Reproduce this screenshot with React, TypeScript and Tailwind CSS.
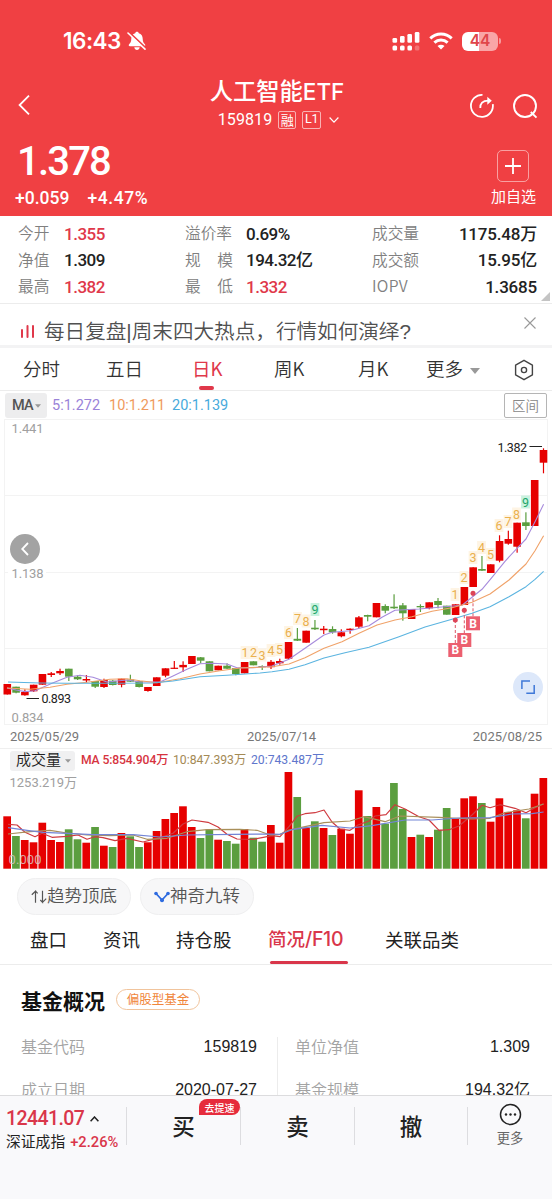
import type { ReactNode } from "react";

type Candle = [dir: "r" | "g", high: number, top: number, bottom: number, low: number];

const STEP = 8.79;
const FIRST_X = 7.3;
const RED = "#e60000";
const GREEN = "#5b9e3f";

// y values share the page scale; the price chart starts at y = 419
const CANDLES: Candle[] = [
  ["r", 684, 684, 694.5, 694.5],
  ["g", 686.7, 686.7, 692.7, 693.3],
  ["r", 689.3, 692, 695.3, 695.7],
  ["r", 684.7, 684.7, 691.3, 692],
  ["r", 674, 674, 684.7, 684.7],
  ["r", 672, 673.3, 675, 677],
  ["r", 668.7, 671, 673.3, 675],
  ["g", 668.7, 668.7, 676.7, 681],
  ["g", 675, 676.7, 679.3, 680],
  ["r", 675, 679, 680.5, 682.7],
  ["g", 681, 681, 686.7, 688],
  ["r", 678.7, 680, 687, 688],
  ["g", 680, 680.7, 685, 685.5],
  ["r", 678.7, 678.7, 684.7, 687.3],
  ["g", 674.7, 679.5, 681.7, 682],
  ["g", 681, 681, 687, 687.5],
  ["r", 687, 687, 691, 691.7],
  ["r", 677.3, 677.3, 686, 686],
  ["r", 668.3, 668.3, 675.7, 677.3],
  ["r", 661, 667.7, 668.9, 669],
  ["r", 661.3, 664.9, 667.3, 672],
  ["r", 656, 656, 664, 664],
  ["g", 657, 657.3, 660.7, 663.3],
  ["g", 661.3, 661.3, 671.3, 671.3],
  ["r", 665.7, 665.7, 670.3, 670.3],
  ["g", 663.3, 665.7, 668.7, 669],
  ["g", 668, 668, 674, 675.3],
  ["r", 662, 662, 673.3, 673.3],
  ["g", 661.3, 661.3, 665.3, 665.3],
  ["g", 665.3, 666, 667.2, 670],
  ["r", 660, 661.8, 667.2, 669],
  ["r", 658.7, 661, 663.3, 664.7],
  ["r", 642, 642, 658.7, 658.7],
  ["g", 628, 638.8, 640.7, 641],
  ["r", 630.7, 630.7, 642.7, 642.7],
  ["g", 620, 627.7, 629.3, 630],
  ["r", 626, 628.7, 630.2, 634],
  ["g", 626.3, 629, 632.3, 633.7],
  ["r", 629.3, 632.3, 636.3, 637.3],
  ["r", 628.3, 628.7, 630, 633.7],
  ["r", 616, 617.3, 626.7, 628],
  ["g", 614.7, 615, 616.7, 621.3],
  ["r", 603, 603, 617.3, 617.3],
  ["g", 604.3, 606, 610.7, 613.3],
  ["g", 594.3, 606.7, 608.3, 609],
  ["g", 603, 605.3, 613.3, 620.7],
  ["r", 609, 609, 619, 619],
  ["g", 604.3, 606, 607.3, 612],
  ["r", 602.3, 602.3, 608.3, 609.3],
  ["g", 598, 601, 605, 608.3],
  ["g", 605.7, 605.7, 614.7, 614.7],
  ["r", 604.3, 604.3, 615, 615],
  ["r", 587, 587, 605, 605],
  ["r", 567.3, 567.3, 587, 587],
  ["g", 556, 569, 570.7, 571],
  ["r", 564.3, 564.3, 573, 573],
  ["r", 535.3, 541, 560.7, 562.3],
  ["r", 530.7, 539, 543.7, 544.7],
  ["r", 522.7, 522.7, 546.7, 552.7],
  ["g", 512.3, 522.3, 526, 530],
  ["r", 480, 480, 526, 526],
  ["r", 448.3, 450, 462.7, 473.3],
];

const VOLUME_TOPS = [
  816.3, 836, 840, 842.3, 822.7, 840, 842, 829.3, 839.3, 842.7, 827, 845.7, 847, 833, 836.3, 847,
  842.3, 831, 819, 813, 806.3, 827, 838, 829.7, 839.7, 841, 843.7, 829, 837.7, 841.7, 825, 842.7,
  772, 797, 827.7, 821.3, 828, 835, 828.7, 833.7, 790.3, 816, 807, 823.7, 783, 809, 837, 834.7,
  837, 829.7, 808, 819, 798.3, 796.3, 803, 821.7, 798.3, 812, 810.3, 818.3, 793.7, 778,
];

const PRICE_MA = [
  {
    color: "#a78bdc",
    points:
      "7,688 16,690 25,691.6 35,690.7 52,683.3 67,677.3 80,675.3 93,677.3 107,682 127,680 140,682 160,682 173,676 187,669.3 200,663.7 213,663.3 227,664 237,667.7 253,667.7 272,666 289,659.3 305,648.3 324,635 332,632.3 350,630.7 369,625.7 382,617.3 395,610.3 419,609 439,607.3 462,605.3 472,597.3 482,589.3 492,577.3 505,561.3 517,548.3 526,539 535,521.7 543.6,504.3",
  },
  {
    color: "#f0a269",
    points:
      "7,688 30,689.3 50,687.3 67,684.3 87,682.3 110,679.3 127,678.7 140,680.7 157,682.7 180,678.7 200,674 220,670.7 240,668 272,666.7 289,664 305,657.7 324,648.3 342,641.7 359,633.3 377,625 395,620 412,616.7 432,611.3 452,607.7 472,602.3 490,594 509,580 526,564 535,550.7 543.6,535.7",
  },
  {
    color: "#5bb4e0",
    points:
      "8,682 40,683 67,683.3 100,683.3 153,683 173,681 200,676.7 227,675.3 260,673 272,671.7 289,669.3 305,664.7 324,658 345,652.7 369,647.3 399,636.7 425,627 452,619.3 472,613.3 490,606.7 509,596.7 526,586.7 535,579.3 543.6,571.3",
  },
];

const VOLUME_MA = [
  {
    color: "#cf3a3f",
    points:
      "8,824.3 17,825 25,832.3 35,836.7 42,833.3 52,837.3 67,836.3 78,835 87,839.3 95,836.7 103,837.7 115,840.7 127,838.3 143,842 160,837.7 173,833.3 183,824 192,820 208,822.3 218,827 227,834.3 237,839 253,839.3 262,837.7 272,835.7 280,836.7 289,826.7 297,816.3 305,813.7 315,812.7 324,810 332,822 340,829 350,830.3 358,825 369,821 375,816 386,814.7 395,804.7 405,809 419,816.7 429,820 439,830.3 449,829.7 459,826 472,815 482,805.3 490,807.7 500,804.7 515,808.3 526,812.7 535,807.7 543.6,803.7",
  },
  {
    color: "#a98f5a",
    points:
      "8,834 30,831.7 50,830.3 67,833 87,835 110,835.7 133,835 147,839.3 167,838.3 187,831.7 207,829.7 240,829.3 257,830.3 270,835 280,834.3 289,830 305,826.7 324,822.7 350,821 364,816.7 385,821.7 400,816 439,817.3 472,819 490,818.3 505,812.7 529,809 543.6,804",
  },
  {
    color: "#7385d6",
    points:
      "8,827.7 27,830.3 43,832.3 67,833.3 93,834.7 133,834.7 160,837 187,835 233,834.3 272,834 280,834.3 292,829.7 322,825.3 350,828 372,825.7 405,820 432,820 459,818 490,817.7 512,814 532,813.7 543.6,812",
  },
];

// nine-turn counters above the candles
const COUNTERS: [x: number, y: number, label: string][] = [
  [245, 652.5, "1"],
  [253.5, 652.5, "2"],
  [262, 655, "3"],
  [271, 650.5, "4"],
  [279.5, 649.5, "5"],
  [288.5, 632.5, "6"],
  [297.5, 618.5, "7"],
  [306, 621, "8"],
  [315, 609.5, "9"],
  [455, 594.5, "1"],
  [464, 577.5, "2"],
  [473, 557.5, "3"],
  [481.5, 547.5, "4"],
  [490.5, 554.5, "5"],
  [499, 525.5, "6"],
  [508, 521.5, "7"],
  [516.5, 514, "8"],
  [525.5, 502, "9"],
];

const BUYS: [x: number, dotY: number, boxY: number][] = [
  [455.3, 620, 650],
  [464.3, 610.3, 640],
  [473, 593.3, 623.3],
];

function StatusBar() {
  return (
    <div className="flex h-[82px] items-center pl-[63px] pr-[51px] text-white">
      <span className="font-[Inter] text-[22.5px] font-semibold tracking-[-0.5px]">16:43</span>
      <svg className="ml-[6px] h-5 w-5" viewBox="0 0 20 20">
        <path
          d="M10 .7c1 0 1.700.6 1.800 1.500 2.600.8 3.900 2.800 3.900 5.600 0 3.200 1 4.200 2.200 5.400.8.900.4 2-.8 2H2.900c-1.200 0-1.600-1.100-.8-2C3.300 12 4.300 11 4.300 7.800c0-2.800 1.300-4.800 3.900-5.600C8.300 1.300 9 .7 10 .7zM7.300 16.300h5.400c-.3 1.700-1.300 2.700-2.700 2.700s-2.400-1-2.700-2.700z"
          fill="currentColor"
        />
        <path d="M2 1.200 19 17.200" stroke="#f04043" strokeWidth="2" />
        <path d="M1 2 18 18.200" stroke="currentColor" strokeWidth="1.600" strokeLinecap="round" />
      </svg>
      <div className="ml-auto flex items-center gap-[9px]">
        <svg className="h-5 w-7" viewBox="0 0 28 20" fill="currentColor">
          <rect x="0.500" y="7" width="4.600" height="4.800" rx="1.300" />
          <rect x="8" y="5" width="4.600" height="6.800" rx="1.300" />
          <rect x="15.400" y="3" width="4.600" height="8.800" rx="1.300" />
          <rect x="22.800" y="1" width="4.600" height="10.800" rx="1.300" />
          <rect x="0.500" y="14.400" width="4.600" height="5" rx="1.500" />
          <rect x="8" y="14.400" width="4.600" height="5" rx="1.500" />
          <rect x="15.400" y="14.400" width="4.600" height="5" rx="1.500" />
          <rect x="22.800" y="14.400" width="4.600" height="5" rx="1.500" opacity="0.250" />
        </svg>
        <svg className="h-[18px] w-6" viewBox="0 0 24 18" fill="none" stroke="currentColor" strokeWidth="3">
          <path d="M1.300 6.300c6-5.700 15.400-5.700 21.400 0" />
          <path d="M5.400 10.700c3.800-3.500 9.400-3.500 13.200 0" />
          <path d="M12 17.500 8.500 14c2-1.700 5-1.700 7 0z" fill="currentColor" stroke="none" />
        </svg>
        <div className="flex items-center">
          <div className="flex h-[19px] w-9 items-center justify-center rounded-[6px] bg-linear-to-r from-white from-46% to-[#f9a5a7] to-46% font-[Inter] text-[15.5px] font-semibold text-[#e0454a]">
            44
          </div>
          <span className="ml-px h-1.5 w-[2px] rounded-r-full bg-[#f79a9c]" />
        </div>
      </div>
    </div>
  );
}

function Header() {
  return (
    <header className="h-[216px] shrink-0 bg-[#f04043] text-white">
      <StatusBar />
      <div className="flex h-[50px] items-center justify-between pl-[17px] pr-[14px]">
        <svg className="-mt-1 h-[22px] w-[68px]" viewBox="0 0 68 22" fill="none" stroke="currentColor" strokeWidth="1.800">
          <path d="M12 1.600 2.600 11l9.400 9.400" />
        </svg>
        <div className="-mt-[9px] flex flex-col items-center">
          <h1 className="h-[30px] text-[23.300px] font-medium leading-[30px]">
            人工智能<span className="font-[Inter] text-[22.500px] font-medium">ETF</span>
          </h1>
          <div className="mt-[4px] flex h-[22px] items-center pl-[3px]">
            <span className="font-[Roboto] text-[16px] tracking-[0.1px]">159819</span>
            <span className="ml-1.5 flex h-[18px] w-[18px] items-center justify-center rounded-[2px] border border-white/60 text-[13px]">融</span>
            <span className="ml-[6px] flex h-[18px] w-[19px] items-center justify-center rounded-[2px] border border-white/60 font-[Roboto] text-[12.5px]">
              L1
            </span>
            <svg className="ml-[8px] h-2 w-2.5" viewBox="0 0 10 8" fill="none" stroke="currentColor" strokeWidth="1.200">
              <path d="M.6 1.500 5 6.200l4.400-4.700" />
            </svg>
          </div>
        </div>
        <div className="-mt-[3px] flex gap-[17px]">
          <svg className="h-[26px] w-[26px]" viewBox="0 0 26 26" fill="none" stroke="currentColor" strokeWidth="1.800">
            <path d="M13.500 1.900A11 11 0 1 0 23.800 11.200" />
            <path d="M11.300 15c-.2-4.600 2.200-7.200 8-7.300" />
            <path d="M18.300 3.800 22.800 7.700l-4.500 4z" fill="currentColor" stroke="none" />
          </svg>
          <svg className="h-[26px] w-[26px]" viewBox="0 0 26 26" fill="none" stroke="currentColor" strokeWidth="1.900">
            <circle cx="13" cy="13" r="11" />
            <path d="m18.800 19 5.700 5.700" />
          </svg>
        </div>
      </div>
      <div className="flex items-start justify-between pl-[15px] pr-[16px]">
        <div className="font-[Roboto] font-medium">
          <div className="mt-[8px] pl-0.5 text-[40px] leading-[44px] tracking-[-1.800px]">1.378</div>
          <div className="mt-[3px] flex gap-[18px] text-[17.500px] leading-[22px]">
            <span>+0.059</span>
            <span className="tracking-[0.6px]">+4.47%</span>
          </div>
        </div>
        <div className="mt-[18px] flex flex-col items-center">
          <span className="flex h-8 w-8 items-center justify-center rounded-[5px] border border-white/50">
            <svg className="h-4 w-4" viewBox="0 0 16 16" stroke="currentColor" strokeWidth="1.800">
              <path d="M0 8h16M8 0v16" />
            </svg>
          </span>
          <span className="mt-[3px] text-[15px] leading-[22px]">加自选</span>
        </div>
      </div>
    </header>
  );
}

function Stat({ label, value, up, labelClass, end }: { label: string; value: string; up?: boolean; labelClass: string; end?: boolean }) {
  return (
    <div className="flex h-[26.500px] items-center">
      <span className={`-mt-0.5 flex shrink-0 justify-between text-[15.700px] font-[350] text-[#808080] ${labelClass}`}>
        {label.split(" ").map((part) => (
          <span key={part}>{part}</span>
        ))}
      </span>
      <span
        className={`whitespace-nowrap font-[Roboto,'Noto_Sans_CJK_SC'] text-[17px] font-medium ${end ? "ml-auto tracking-[-0.2px]" : "tracking-[-0.5px]"} ${up ? "text-[#e0384a]" : "text-[#222]"}`}
      >
        {value}
      </span>
    </div>
  );
}

function Stats() {
  return (
    <section className="flex h-[88px] shrink-0 border-b border-[#ececec] pl-[18px] pr-[15px] pt-[5px]">
      <div className="w-[167px]">
        <Stat label="今开" value="1.355" up labelClass="mr-[14px] w-8" />
        <Stat label="净值" value="1.309" labelClass="mr-[14px] w-8" />
        <Stat label="最高" value="1.382" up labelClass="mr-[14px] w-8" />
      </div>
      <div className="w-[187px]">
        <Stat label="溢价率" value="0.69%" labelClass="mr-[13px] w-12" />
        <Stat label="规 模" value="194.32亿" labelClass="mr-[13px] w-12" />
        <Stat label="最 低" value="1.332" up labelClass="mr-[13px] w-12" />
      </div>
      <div className="relative flex-1">
        <Stat label="成交量" value="1175.48万" labelClass="" end />
        <Stat label="成交额" value="15.95亿" labelClass="" end />
        <Stat label="IOPV" value="1.3685" labelClass="tracking-[0.3px]" end />
        <svg className="absolute -right-[13px] bottom-[2px] h-[9px] w-[9px]" viewBox="0 0 9 9">
          <path d="M9 0v9H0z" fill="#c4c4c4" />
        </svg>
      </div>
    </section>
  );
}

function NewsTicker() {
  return (
    <div className="flex h-[44px] shrink-0 items-start overflow-hidden border-b-[3px] border-[#f3f3f4] pl-5 pr-[16px]">
      <svg className="mt-[21px] h-[13px] w-[15px]" viewBox="0 0 15 13" stroke="#e0384a" strokeWidth="2">
        <path d="M2 5v7M7.500 1v11M13 1v11" strokeLinecap="round" />
      </svg>
      <span className="ml-[9px] mt-[13px] whitespace-nowrap font-['Liberation_Sans','Noto_Sans_CJK_SC'] text-[20.600px] font-[350] leading-[30px] text-[#505050]">
        每日复盘|周末四大热点，行情如何演绎?
      </span>
      <svg className="ml-auto mt-[13px] h-3 w-3" viewBox="0 0 12 12" stroke="#999" strokeWidth="1.100">
        <path d="m.5.5 11 11M11.500.5l-11 11" />
      </svg>
    </div>
  );
}

function Caret({ className }: { className: string }) {
  return (
    <svg className={className} viewBox="0 0 10 6" fill="#999">
      <path d="M0 0h10L5 6z" />
    </svg>
  );
}

function PeriodTabs() {
  return (
    <nav className="flex h-[43px] shrink-0 items-center border-b border-[#ececec] pl-[23px] text-[18.500px] font-[350] text-[#333]">
      <span className="w-[83px]">分时</span>
      <span className="w-[86px]">五日</span>
      <span className="relative w-[82px] font-normal text-[#e0384a]">
        日K
        <i className="absolute -bottom-[7px] left-[7px] h-1 w-[15px] rounded-full bg-[#e0384a]" />
      </span>
      <span className="w-[84px]">周K</span>
      <span className="w-[68px]">月K</span>
      <span>更多</span>
      <Caret className="ml-[7px] mt-1 h-1.5 w-2.5" />
      <svg className="ml-[34px] mt-px h-[22px] w-[20px]" viewBox="0 0 20 22" fill="none" stroke="#444" strokeWidth="1.400">
        <path d="m10 1.300 8.400 4.800v9.800L10 20.700l-8.400-4.800V6.100z" strokeLinejoin="round" />
        <circle cx="10" cy="11" r="2.600" />
      </svg>
    </nav>
  );
}

function IndicatorRow() {
  return (
    <div className="flex h-7 shrink-0 items-center px-[5px] pt-px font-[Roboto] text-[14.500px]">
      <span className="flex h-[25px] w-[42px] items-center rounded-[3px] bg-[#ededee] pl-[7px] text-[14.500px] font-medium tracking-[-0.8px] text-[#555]">
        MA
        <Caret className="ml-[2px] h-1 w-1.5" />
      </span>
      <span className="ml-[5px] w-[57px] text-[#9a83d8]">5:1.272</span>
      <span className="w-[63px] text-[#ef9a5d]">10:1.211</span>
      <span className="text-[#48aadc]">20:1.139</span>
      <span className="ml-auto flex h-[25px] w-[43px] items-center justify-center rounded-[2px] border border-[#b5b5b5] font-['Noto_Sans_CJK_SC'] text-[13.500px] font-[350] text-[#888]">
        区间
      </span>
    </div>
  );
}

function PriceChart() {
  return (
    <div className="relative h-[306px] shrink-0">
      <svg className="block h-full w-full font-[Roboto,sans-serif]" viewBox="0 419 552 306">
        <path d="M4 419.500h543M4 495.500h543M4 572.500h543M4 648.500h543M4 724.500h543M4.500 419v306M547.500 419v306" stroke="#f3f3f3" />
        <g fill="#a0a0a0" fontSize="13">
          <rect x="8" y="565" width="38" height="15" fill="#fff" />
          <text x="11.500" y="433.300" textLength="32">1.441</text>
          <text x="11.500" y="577.500" textLength="32">1.138</text>
          <text x="11.500" y="721.500" textLength="32">0.834</text>
        </g>
        {COUNTERS.map(([x, y, label]) => (
          <g key={x}>
            <rect x={x - 4.400} y={y - 6.500} width="8.800" height="13" fill={label === "9" ? "#c9f2df" : "#fef4e4"} />
            <text x={x} y={y + 4.500} textAnchor="middle" fontSize="12.500" fill={label === "9" ? "#1fa56b" : "#eab04e"}>
              {label}
            </text>
          </g>
        ))}
        {CANDLES.map(([dir, high, top, bottom, low], i) => {
          const x = FIRST_X + i * STEP;
          const color = dir === "r" ? RED : GREEN;
          return (
            <g key={i} fill={color}>
              <rect x={x - 0.600} y={high} width="1.200" height={low - high} />
              <rect x={x - 3.800} y={top} width="7.600" height={bottom - top} />
            </g>
          );
        })}
        {PRICE_MA.map((line) => (
          <polyline key={line.color} points={line.points} fill="none" stroke={line.color} strokeWidth="1.100" strokeLinejoin="round" />
        ))}
        {BUYS.map(([x, dotY, boxY]) => (
          <g key={x}>
            <path d={`M${x} ${dotY}V${boxY}`} stroke="#dd5566" strokeDasharray="3 2" />
            <circle cx={x} cy={dotY} r="2.500" fill="#dd4458" />
            <rect x={x - 7} y={boxY - 7} width="14" height="14" fill="#ec5f6f" />
            <text x={x} y={boxY + 4.300} textAnchor="middle" fontSize="12" fontWeight="700" fill="#fff">
              B
            </text>
          </g>
        ))}
        <path d="M26.500 698.500h12.500M529.500 446.500h12.500" stroke="#222" strokeWidth="1.200" />
        <g fill="#222" fontSize="12.500">
          <text x="41.500" y="703.300" textLength="29.500">0.893</text>
          <text x="497.500" y="451.500" textLength="29.500">1.382</text>
        </g>
      </svg>
      <button type="button" aria-label="向前" className="absolute left-[10px] top-[115px] flex h-[30px] w-[30px] items-center justify-center rounded-full bg-[#a3a3a3]">
        <svg className="h-3.5 w-2" viewBox="0 0 8 14" fill="none" stroke="#fff" strokeWidth="1.800">
          <path d="M7 1 1.200 7 7 13" />
        </svg>
      </button>
      <button type="button" aria-label="全屏" className="absolute right-[9px] top-[253px] flex h-[30px] w-[30px] items-center justify-center rounded-full bg-[#dde8fa]">
        <svg className="h-3.5 w-3.5" viewBox="0 0 14 14" fill="none" stroke="#3f78d8" strokeWidth="1.500">
          <path d="M.9 9V.9H9M5.300 13.200h7.900V5" />
        </svg>
      </button>
    </div>
  );
}

function VolumeChart() {
  return (
    <section className="shrink-0 border-t border-[#efefef] font-[Roboto,'Noto_Sans_CJK_SC']">
      <div className="flex h-[23px] items-center whitespace-nowrap pl-[10px] text-[12.200px]">
        <span className="flex h-5 w-[65px] items-center rounded-[3px] bg-[#f0f0f1] pl-[6px] text-[15px] font-[350] text-[#222]">
          成交量
          <Caret className="ml-[4px] h-1 w-1.5" />
        </span>
        <span className="ml-[6px] w-[92px] font-medium tracking-[-0.15px] text-[#d6333f]">MA 5:854.904万</span>
        <span className="w-[78px] text-[#a48a55]">10:847.393万</span>
        <span className="text-[#6076cc]">20:743.487万</span>
      </div>
      <svg className="block h-[97px] w-full" viewBox="0 772 552 97">
        <text x="9.500" y="786.500" fontSize="13" fill="#a0a0a0" textLength="67.500">
          1253.219万
        </text>
        {VOLUME_TOPS.map((top, i) => (
          <rect key={i} x={3.300 + i * STEP} y={top} width="7.700" height={868.700 - top} fill={CANDLES[i][0] === "r" ? RED : GREEN} />
        ))}
        {VOLUME_MA.map((line) => (
          <polyline key={line.color} points={line.points} fill="none" stroke={line.color} strokeWidth="1.200" strokeLinejoin="round" />
        ))}
        <text x="8.500" y="864.300" fontSize="13" fill="#d8c8c4" fillOpacity="0.850" textLength="33">
          0.000
        </text>
      </svg>
    </section>
  );
}

function Chip({ icon, children }: { icon: ReactNode; children: ReactNode }) {
  return (
    <span className="flex h-[37px] w-[114px] items-center justify-center rounded-full border border-[#efeff0] bg-[#f7f7f8] text-[17.500px] font-[350] text-[#555]">
      {icon}
      <span className="-mt-0.5">{children}</span>
    </span>
  );
}

function Chips() {
  return (
    <div className="flex shrink-0 gap-[9px] pl-[17px] pt-[9px]">
      <Chip
        icon={
          <svg className="h-3.5 w-4" viewBox="0 0 16 14" fill="none" stroke="#555" strokeWidth="1.200">
            <path d="M.8 4.800 4.500 1.200v11.500M4.500 1.200l2.200 2.200M9.300 10l2.200 2.300V.8M11.500 12.300l3.700-3.700" />
          </svg>
        }
      >
        趋势顶底
      </Chip>
      <Chip
        icon={
          <svg className="h-3 w-4" viewBox="0 0 16 12" fill="#2e6be0">
            <path d="M2 2.500 8 9l6-6.500" fill="none" stroke="#2e6be0" strokeWidth="1.800" />
            <circle cx="2" cy="2.500" r="1.800" />
            <circle cx="8" cy="9.300" r="2" />
            <circle cx="14" cy="2.500" r="1.800" />
          </svg>
        }
      >
        神奇九转
      </Chip>
    </div>
  );
}

function SectionTabs() {
  return (
    <nav className="flex h-[50px] shrink-0 items-center border-b border-[#ececec] pl-[30px] text-[18.500px] text-[#222]">
      <span className="w-[73px]">盘口</span>
      <span className="w-[73px]">资讯</span>
      <span className="w-[92px]">持仓股</span>
      <span className="relative w-[117px] font-medium text-[#d9364a]">
        简况<span className="font-[Inter] text-[19.500px] tracking-[-0.3px]">/F10</span>
        <i className="absolute -bottom-[10px] left-[1.500px] h-[3.500px] w-[78px] rounded-full bg-[#d9364a]" />
      </span>
      <span>关联品类</span>
    </nav>
  );
}

function Fact({ label, value }: { label: string; value: string }) {
  return (
    <div className="flex h-[42.500px] items-center justify-between">
      <span className="-mt-[2px] text-[16px] font-[350] text-[#a3a3a3]">{label}</span>
      <span className="font-['Liberation_Sans','Noto_Sans_CJK_SC'] text-[16px] text-[#222]">{value}</span>
    </div>
  );
}

function FundOverview() {
  return (
    <section className="h-[130px] shrink-0 overflow-hidden pl-[21px] pr-[22px]">
      <div className="flex h-[61px] items-center pt-[10px]">
        <h2 className="text-[21px] font-bold text-[#111]">基金概况</h2>
        <span className="-mt-0.5 ml-[11px] flex h-[21px] w-[84px] items-center justify-center rounded-full border border-[#f1c49c] text-[12.500px] text-[#f0863a]">
          偏股型基金
        </span>
      </div>
      <div className="grid grid-cols-[256px_1fr]">
        <div className="pr-[20px]">
          <Fact label="基金代码" value="159819" />
          <Fact label="成立日期" value="2020-07-27" />
        </div>
        <div className="mt-[11px] border-l border-[#ececec] pl-[17px]">
          <div className="-mt-[11px]">
            <Fact label="单位净值" value="1.309" />
            <Fact label="基金规模" value="194.32亿" />
          </div>
        </div>
      </div>
    </section>
  );
}

function TradeBar() {
  const cell = "relative flex h-[38px] items-center justify-center border-l border-[#dddde0] text-[22.500px] font-medium";
  return (
    <footer className="flex h-[104px] shrink-0 border-t border-[#dcdcde] bg-[#f9f9fb] pt-[11px] text-[#222]">
      <div className="w-[126px] pl-[6px] font-[Roboto,'Noto_Sans_CJK_SC']">
        <div className="flex h-6 items-center text-[19.500px] font-medium tracking-[-0.600px] text-[#d9364a]">
          12441.07
          <svg className="ml-[6px] h-1.5 w-[9px]" viewBox="0 0 9 6" fill="none" stroke="#222" strokeWidth="1.500">
            <path d="M.6 5.300 4.500 1l3.900 4.300" />
          </svg>
        </div>
        <div className="flex h-[22px] items-center whitespace-nowrap text-[14.800px]">
          深证成指
          <span className="ml-[5px] text-[14.700px] font-medium text-[#d9364a]">+2.26%</span>
        </div>
      </div>
      <div className={`${cell} w-[114px]`}>
        买
        <span className="absolute -top-[8px] left-[72px] flex h-4 w-[41px] items-center justify-center rounded-[8px] rounded-bl-none bg-[#e62c3c] text-[10px] font-medium text-white">
          去提速
        </span>
      </div>
      <div className={`${cell} w-[114px]`}>卖</div>
      <div className={`${cell} w-[113px]`}>撤</div>
      <div className="relative flex h-[38px] flex-1 flex-col items-center border-l border-[#dddde0]">
        <svg className="-mt-1 h-[23px] w-[23px] shrink-0" viewBox="0 0 23 23" fill="#222">
          <circle cx="11.500" cy="11.500" r="10" fill="none" stroke="#222" strokeWidth="1.500" />
          <circle cx="7" cy="11.500" r="1.200" />
          <circle cx="11.500" cy="11.500" r="1.200" />
          <circle cx="16" cy="11.500" r="1.200" />
        </svg>
        <span className="mt-[3px] text-[13.300px] leading-[18px] text-[#666]">更多</span>
      </div>
    </footer>
  );
}

export default function App() {
  return (
    <main className="flex h-[1199px] w-[552px] flex-col overflow-hidden bg-white font-['Noto_Sans_CJK_SC',sans-serif]">
      <Header />
      <Stats />
      <NewsTicker />
      <PeriodTabs />
      <IndicatorRow />
      <PriceChart />
      <div className="flex h-[23px] shrink-0 items-center px-[10px] font-[Roboto] text-[13px] text-[#777]">
        <span className="w-[237px]">2025/05/29</span>
        <span>2025/07/14</span>
        <span className="ml-auto">2025/08/25</span>
      </div>
      <VolumeChart />
      <Chips />
      <SectionTabs />
      <FundOverview />
      <TradeBar />
    </main>
  );
}
